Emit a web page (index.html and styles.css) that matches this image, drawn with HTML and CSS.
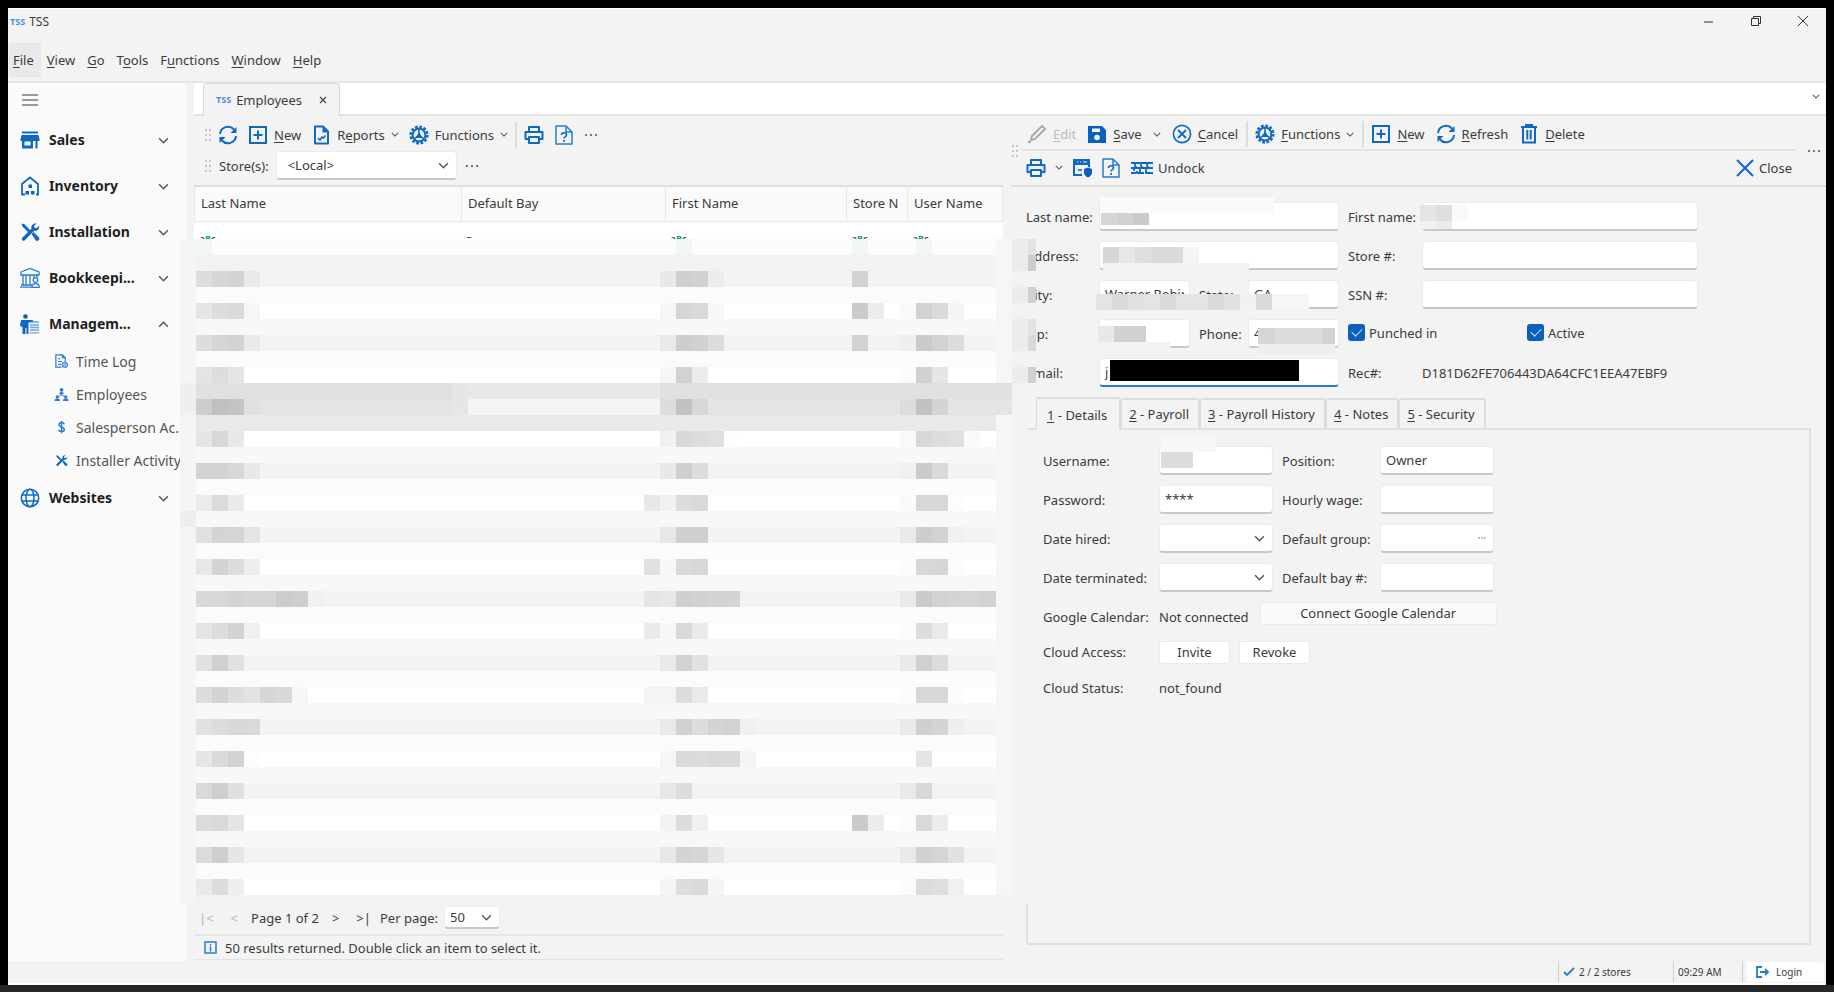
FILE: index.html
```html
<!DOCTYPE html>
<html lang="en">
<head>
  <meta charset="UTF-8">
  <meta name="viewport" content="width=device-width, initial-scale=1.0">
  <title>TSS</title>
  <link rel="stylesheet" href="styles.css">
</head>
<body>
  <!-- shared icons -->
  <svg class="sprite" width="0" height="0">
    <symbol id="i-chevron" viewBox="0 0 10 6"><path d="M1 1l4 4 4-4" fill="none" stroke="#555" stroke-width="1.300"/></symbol>
    <symbol id="i-refresh" viewBox="0 0 20 20"><g fill="none" stroke="#0f68c4" stroke-width="2"><path d="M2 9a8 8 0 0 1 14-4.500"/><path d="M18 11a8 8 0 0 1-14 4.500"/></g><path d="M18.500 2v6h-6zM1.500 18v-6h6z" fill="#0f68c4"/></symbol>
    <symbol id="i-new" viewBox="0 0 20 20"><path d="M2 2h16v16H2zM10 5.500v9M5.500 10h9" fill="none" stroke="#0f68c4" stroke-width="2"/></symbol>
    <symbol id="i-report" viewBox="0 0 20 20"><path d="M4 1.500h8l5 5v12H4z" fill="none" stroke="#0f68c4" stroke-width="2" stroke-linejoin="round"/><path d="M11.500 1.500v6H17z" fill="#0f68c4"/><path d="M7 13l2 2 2-3 1.500 1 2-2.500" fill="none" stroke="#0f68c4" stroke-width="1.600"/></symbol>
    <symbol id="i-gear" viewBox="0 0 20 20"><circle cx="10" cy="10" r="8.400" fill="none" stroke="#0f68c4" stroke-width="2.400" stroke-dasharray="2.700 1.700"/><circle cx="10" cy="10" r="6.400" fill="none" stroke="#0f68c4" stroke-width="2"/><path d="M10 4v6l-5 4M10 10l5 4" fill="none" stroke="#0f68c4" stroke-width="1.500"/><path d="M10 7l3.500 6h-7z" fill="#0f68c4"/></symbol>
    <symbol id="i-print" viewBox="0 0 20 20"><path d="M5 7V2h10v5M5 14H1.500V7h17v7H15M5 12h10v6H5z" fill="none" stroke="#0f68c4" stroke-width="2" stroke-linejoin="round"/></symbol>
    <symbol id="i-help" viewBox="0 0 20 20"><path d="M2 1h10l6 6v12H2z" fill="none" stroke="#2a7bd0" stroke-width="1.500" stroke-linejoin="round"/><path d="M12 1v6h6" fill="none" stroke="#2a7bd0" stroke-width="1.500"/><path d="M7.500 10c0-3 5-3 5 0 0 1.600-2.500 1.700-2.500 3.500M10 15v2" fill="none" stroke="#0f68c4" stroke-width="1.600"/></symbol>
    <symbol id="i-edit" viewBox="0 0 20 20"><path d="M5 12L15 2l3 3L8 15l-4 1z" fill="none" stroke="#a6a6a6" stroke-width="1.800"/><path d="M1 17h3v2H1z" fill="#a6a6a6"/></symbol>
    <symbol id="i-save" viewBox="0 0 20 20"><path d="M2 2h13l4 4v13H1V2z" fill="#0a60bd"/><path d="M5 4.500h8V8H5z" fill="#f3f3f3"/><circle cx="10" cy="13.500" r="2.800" fill="#f3f3f3"/></symbol>
    <symbol id="i-cancel" viewBox="0 0 20 20"><g fill="none" stroke="#0f68c4"><circle cx="10" cy="10" r="8.600" stroke-width="1.600"/><path d="M6 6l8 8M14 6l-8 8" stroke-width="1.800"/></g></symbol>
    <symbol id="i-trash" viewBox="0 0 20 20"><path d="M2 3h16M7 3V1h6v2M4 3v15.500h12V3M8.300 6v9.500M11.700 6v9.500" fill="none" stroke="#0f68c4" stroke-width="2"/></symbol>
    <symbol id="i-shield" viewBox="0 0 20 20"><path d="M10 17H2V2h15v7M2 6h15" fill="none" stroke="#0f68c4" stroke-width="2"/><path d="M2 2h15v4H2z" fill="#0f68c4"/><path d="M5 4h1M8 4h1M11 4h4" stroke="#f3f3f3" stroke-width="1.200"/><path d="M6 12h4" stroke="#0f68c4" stroke-width="1.600"/><path d="M12 11l4-1.500 4 1.500v3.500c0 2.500-2 4-4 5-2-1-4-2.500-4-5z" fill="#0a60bd"/></symbol>
    <symbol id="i-undock" viewBox="0 0 24 20"><path d="M1 5h22M1 10h22M1 15h4c2 0 2-2 2-2m0 2h7m1 0h8M5 5v3l2 2M11 5v3l2 2M17 5v3l2 2M4 10v3M10 10v5M16 10v5" fill="none" stroke="#0f68c4" stroke-width="1.800"/></symbol>
    <symbol id="i-close" viewBox="0 0 20 20"><path d="M2 2l16 16M18 2L2 18" stroke="#0f68c4" stroke-width="2"/></symbol>
    <symbol id="i-tools" viewBox="0 0 20 20"><path d="M1.500 1.500l3 .7L10 8l1.500-1.500c-.7-3 1.500-5.500 5-5L14 4l.6 1.800 1.800.4L19 3.800c.6 3.500-2 5.600-4.800 5L4.500 18.500c-1.500 1-3.500-1-2.500-2.500l6-6L2.400 4.500z" fill="#0f68c4"/><path d="M11.500 12l2-2 5.500 5.500c1.500 2-1.500 4.500-3.200 3z" fill="#0f68c4"/></symbol>
    <symbol id="i-dots" viewBox="0 0 14 4"><path d="M1 1h2v2H1zM6 1h2v2H6zM11 1h2v2h-2z" fill="#777"/></symbol>
    <symbol id="i-grip" viewBox="0 0 6 12"><path d="M0 0h2v2H0zM4 0h2v2H4zM0 5h2v2H0zM4 5h2v2H4zM0 10h2v2H0zM4 10h2v2H4z" fill="#c6c6c6"/></symbol>
  </svg>

  <div class="window">
    <header class="titlebar">
      <span class="logo">TSS</span>
      <span class="title">TSS</span>
      <div class="win-controls">
        <button aria-label="Minimize"><svg width="12" height="12" viewBox="0 0 12 12"><path d="M1 7h9" stroke="#333"/></svg></button>
        <button aria-label="Restore"><svg width="12" height="12" viewBox="0 0 12 12"><path d="M1.500 3.500h7v7h-7zM3.500 3.500v-2h7v7h-2" fill="none" stroke="#333"/></svg></button>
        <button aria-label="Close window"><svg width="12" height="12" viewBox="0 0 12 12"><path d="M1 1l10 10M11 1L1 11" stroke="#333"/></svg></button>
      </div>
    </header>

    <nav class="menubar">
      <button class="open"><u>F</u>ile</button>
      <button><u>V</u>iew</button>
      <button><u>G</u>o</button>
      <button>T<u>o</u>ols</button>
      <button>F<u>u</u>nctions</button>
      <button><u>W</u>indow</button>
      <button><u>H</u>elp</button>
    </nav>

    <div class="workspace">
      <aside class="sidebar">
        <button class="burger" aria-label="Menu"><svg width="16" height="14" viewBox="0 0 16 14"><path d="M0 2h16M0 7h16M0 12h16" stroke="#9a9a9a" stroke-width="2"/></svg></button>
        <button class="group">
          <svg class="nav-icon" viewBox="0 0 20 20"><path d="M2 1.500h16v2H2zM1.500 5h17l1 4.500V11h-2v7.500h-2V11H13v7.500H2V11H.5V9.500z" fill="#0f68c4"/><path d="M4.500 11.500h6v4h-6z" fill="#fafafa"/></svg>
          <span>Sales</span><svg class="chev"><use href="#i-chevron"/></svg>
        </button>
        <button class="group">
          <svg class="nav-icon" viewBox="0 0 20 20"><path d="M5 18.500H2V8l8-6.500L18 8v10.500h-2" fill="none" stroke="#0f68c4" stroke-width="1.800"/><path d="M8.500 8.500h3.500v3.500H8.500zM5.500 15H9v3.500H5.500zM11 15h3.500v3.500H11z" fill="#0a60bd"/></svg>
          <span>Inventory</span><svg class="chev"><use href="#i-chevron"/></svg>
        </button>
        <button class="group">
          <svg class="nav-icon"><use href="#i-tools"/></svg>
          <span>Installation</span><svg class="chev"><use href="#i-chevron"/></svg>
        </button>
        <button class="group">
          <svg class="nav-icon" viewBox="0 0 20 20"><path d="M1 4l9-3.500L19 4v3H1zM3 7v10M6 7v10M10 7v10M14 7v3M17 7v3M0 19.200h12M1 17h11" fill="none" stroke="#2a7bd0" stroke-width="1.300"/><circle cx="15.500" cy="12" r="2.300" fill="none" stroke="#2a7bd0" stroke-width="1.300"/><path d="M12 19.300c0-5 7.200-5 7.200 0z" fill="none" stroke="#2a7bd0" stroke-width="1.300"/></svg>
          <span>Bookkeepi...</span><svg class="chev"><use href="#i-chevron"/></svg>
        </button>
        <button class="group">
          <svg class="nav-icon" viewBox="0 0 20 20"><circle cx="5.500" cy="2.500" r="2.300" fill="#0a60bd"/><path d="M1 6h12v2.500H8.500V20H6.500v-6h-1v6H2.500v-7L0 12z" fill="#0f68c4"/><path d="M11 8h8M10 11h9M10 13.500h9M10 16h9M10 18.800h9" stroke="#6aa5de" stroke-width="1.300"/></svg>
          <span>Managem...</span><svg class="chev up"><use href="#i-chevron"/></svg>
        </button>
        <div class="subnav">
          <a href="#timelog"><svg viewBox="0 0 16 16"><path d="M8 14H2V1h7l3 3v4M9 1v3h3M4.500 5h2M4.500 8h4M4.500 11h3" fill="none" stroke="#2a7bd0" stroke-width="1.300"/><circle cx="11.500" cy="11.500" r="3" fill="#8dbbe8" stroke="#2a7bd0"/></svg><span>Time Log</span></a>
          <a href="#employees"><svg viewBox="0 0 16 16"><path d="M8 5v4M5 10l3-2 3 2" stroke="#2a7bd0" fill="none"/><g fill="#2a7bd0"><circle cx="8" cy="3" r="2"/><path d="M5.500 7.500c0-3 5-3 5 0z"/><circle cx="3.500" cy="10.500" r="1.800"/><path d="M.5 15c0-4 6-4 6 0z"/><circle cx="12.500" cy="10.500" r="1.800"/><path d="M9.500 15c0-4 6-4 6 0z"/></g></svg><span>Employees</span></a>
          <a href="#salesperson"><svg viewBox="0 0 16 16"><path d="M11 4.500C10 2 5.300 2.300 5.300 5c0 3.200 5.700 1.800 5.700 5 0 2.800-5 2.900-6 .3M8 1v13" fill="none" stroke="#2a7bd0" stroke-width="1.600"/></svg><span>Salesperson Ac..</span></a>
          <a href="#installer"><svg viewBox="-2 -2 24 24"><use href="#i-tools" width="20" height="20"/></svg><span>Installer Activity</span></a>
        </div>
        <button class="group">
          <svg class="nav-icon" viewBox="0 0 20 20"><g fill="none" stroke="#0f68c4" stroke-width="1.500"><circle cx="10" cy="10" r="8.700"/><ellipse cx="10" cy="10" rx="4" ry="8.700"/><path d="M1.500 7h17M1.500 13h17"/></g></svg>
          <span>Websites</span><svg class="chev"><use href="#i-chevron"/></svg>
        </button>
      </aside>

      <main class="content">
        <div class="doc-tabs">
          <div class="doc-tab"><span class="logo">TSS</span>Employees<button aria-label="Close tab"><svg width="8" height="8" viewBox="0 0 8 8"><path d="M1 1l6 6M7 1L1 7" stroke="#444" stroke-width="1.200"/></svg></button></div>
          <button class="tab-list" aria-label="Tab list"><svg class="drop"><use href="#i-chevron"/></svg></button>
        </div>

        <div class="panes">
          <section class="list-pane">
            <div class="toolbars">
              <div class="toolbar">
                <svg class="grip"><use href="#i-grip"/></svg>
                <button class="tool" aria-label="Refresh list"><svg class="icon"><use href="#i-refresh"/></svg></button>
                <button class="tool"><svg class="icon"><use href="#i-new"/></svg><span><u>N</u>ew</span></button>
                <button class="tool"><svg class="icon"><use href="#i-report"/></svg><span>R<u>e</u>ports</span><svg class="drop"><use href="#i-chevron"/></svg></button>
                <button class="tool"><svg class="icon"><use href="#i-gear"/></svg><span>Functions</span><svg class="drop"><use href="#i-chevron"/></svg></button>
                <i class="sep"></i>
                <button class="tool" aria-label="Print list"><svg class="icon"><use href="#i-print"/></svg></button>
                <button class="tool" aria-label="Help"><svg class="icon"><use href="#i-help"/></svg></button>
                <button class="tool" aria-label="More"><svg class="dots"><use href="#i-dots"/></svg></button>
              </div>
              <div class="toolbar">
                <svg class="grip"><use href="#i-grip"/></svg>
                <label for="stores">Store(s):</label>
                <div class="picker store-picker">
                  <select id="stores"><option>&lt;Local&gt;</option></select>
                  <svg class="chev"><use href="#i-chevron"/></svg>
                </div>
                <button class="tool" aria-label="More"><svg class="dots"><use href="#i-dots"/></svg></button>
              </div>
            </div>

            <div class="grid">
              <table>
                <colgroup><col class="c-last"><col class="c-bay"><col class="c-first"><col class="c-store"><col></colgroup>
                <thead>
                  <tr><th>Last Name</th><th>Default Bay</th><th>First Name</th><th>Store N</th><th>User Name</th></tr>
                  <tr class="filters"><td><i>a</i>B<i>c</i></td><td><i>=</i></td><td><i>a</i>B<i>c</i></td><td><i>a</i>B<i>c</i></td><td><i>a</i>B<i>c</i></td></tr>
                </thead>
                <tbody id="rows"></tbody>
              </table>
              <svg id="mosaic" class="mosaic" width="856" height="665" shape-rendering="crispEdges"></svg>
            </div>

            <div class="pager">
              <button class="off" aria-label="First page">|&lt;</button>
              <button class="off" aria-label="Previous page">&lt;</button>
              <span>Page 1 of 2</span>
              <button aria-label="Next page">&gt;</button>
              <button aria-label="Last page">&gt;|</button>
              <label for="perpage">Per page:</label>
              <div class="picker page-picker">
                <select id="perpage"><option>50</option></select>
                <svg class="chev"><use href="#i-chevron"/></svg>
              </div>
            </div>
            <div class="results">
              <svg width="13" height="13" viewBox="0 0 13 13"><path d="M1 1h11v11H1z" fill="none" stroke="#2a7bd0" stroke-width="1.500"/><path d="M6.500 3v1.500M6.500 5.500v5" stroke="#2a7bd0" stroke-width="1.500"/></svg>
              <span>50 results returned. Double click an item to select it.</span>
            </div>
          </section>

          <section class="detail-pane">
            <div class="detail-bars">
              <svg class="grip"><use href="#i-grip"/></svg>
              <div class="bar-rows">
                <div class="toolbar first">
                  <button class="tool" disabled><svg class="icon"><use href="#i-edit"/></svg><span><u>E</u>dit</span></button>
                  <button class="tool"><svg class="icon"><use href="#i-save"/></svg><span><u>S</u>ave</span></button>
                  <button class="tool" aria-label="Save options"><svg class="drop"><use href="#i-chevron"/></svg></button>
                  <button class="tool"><svg class="icon"><use href="#i-cancel"/></svg><span><u>C</u>ancel</span></button>
                  <i class="sep"></i>
                  <button class="tool"><svg class="icon"><use href="#i-gear"/></svg><span><u>F</u>unctions</span><svg class="drop"><use href="#i-chevron"/></svg></button>
                  <i class="sep"></i>
                  <button class="tool"><svg class="icon"><use href="#i-new"/></svg><span><u>N</u>ew</span></button>
                  <button class="tool"><svg class="icon"><use href="#i-refresh"/></svg><span><u>R</u>efresh</span></button>
                  <button class="tool"><svg class="icon"><use href="#i-trash"/></svg><span><u>D</u>elete</span></button>
                </div>
                <div class="toolbar second">
                  <button class="tool" aria-label="Print"><svg class="icon"><use href="#i-print"/></svg></button>
                  <button class="tool" aria-label="Print options"><svg class="drop"><use href="#i-chevron"/></svg></button>
                  <button class="tool" aria-label="Permissions"><svg class="icon"><use href="#i-shield"/></svg></button>
                  <button class="tool" aria-label="Help"><svg class="icon"><use href="#i-help"/></svg></button>
                  <button class="tool"><svg class="icon wide"><use href="#i-undock"/></svg><span>Undock</span></button>
                  <button class="tool close"><svg class="icon"><use href="#i-close"/></svg><span>Close</span></button>
                </div>
              </div>
              <button class="tool" aria-label="More"><svg class="dots"><use href="#i-dots"/></svg></button>
            </div>

            <form class="person">
              <label for="last">Last name:</label>
              <div class="field wide"><input id="last">
                <svg class="mask"><path d="M2-5h173v16H2z" fill="#fafafa"/><path d="M2 11h16v12H2z" fill="#d6d6d6"/><path d="M18 11h16v12H18z" fill="#d1d1d1"/><path d="M34 11h16v12H34z" fill="#cbcbcb"/></svg></div>
              <label class="second-label" for="first">First name:</label>
              <div class="field"><input id="first">
                <svg class="mask"><path d="M-2 3h16v16H-2z" fill="#e4e4e4"/><path d="M14 3h16v16H14z" fill="#dfdfdf"/><path d="M30 3h16v16H30z" fill="#fafafa"/><path d="M-2 19h16v8H-2z" fill="#f1f1f1"/><path d="M14 19h16v8H14z" fill="#ebebeb"/></svg></div>

              <label for="addr">Address:</label>
              <div class="field wide"><input id="addr">
                <svg class="mask"><path d="M4 6h16v16H4z" fill="#d6d6d6"/><path d="M20 6h16v16H20z" fill="#e7e7e7"/><path d="M36 6h16v16H36z" fill="#dedede"/><path d="M52 6h32v16H52z" fill="#dadada"/><path d="M84 6h16v16H84z" fill="#f5f5f5"/><path d="M4 22h146v10H4z" fill="#f2f2f2"/></svg></div>
              <label class="second-label" for="store">Store #:</label>
              <div class="field"><input id="store"></div>

              <label for="city">City:</label>
              <div class="field"><input id="city" value="Warner Robins">
                <svg class="mask"><path d="M-3 14h213v16H-3z" fill="#e4e4e4"/><path d="M13 14h16v16H13zM61 14h16v16H61zM109 14h16v16h-16zM157 14h16v16h-16z" fill="#dadada"/><path d="M29 14h16v16H29zM125 14h16v16h-16z" fill="#e0e0e0"/><path d="M141 14h16v16h-16z" fill="#f1f1f1"/><path d="M173 14h37v16h-37z" fill="#f6f6f6"/><path d="M-3 30h213v8H-3z" fill="#f3f3f3"/></svg></div>
              <label class="second-label" for="state">State:</label>
              <div class="field under"><input id="state" value="GA"></div>
              <label class="second-label" for="ssn">SSN #:</label>
              <div class="field"><input id="ssn"></div>

              <label for="zip">Zip:</label>
              <div class="field"><input id="zip">
                <svg class="mask"><path d="M-1 7h16v16H-1z" fill="#e8e8e8"/><path d="M15 7h32v16H15z" fill="#d1d1d1"/><path d="M-1 23h72v6H-1z" fill="#f2f2f2"/></svg></div>
              <label class="second-label" for="phone">Phone:</label>
              <div class="field"><input id="phone" value="4">
                <svg class="mask"><path d="M10 9h77v16H10z" fill="#dcdcdc"/><path d="M10 9h16v16H10z" fill="#d5d5d5"/><path d="M74 9h13v16H74z" fill="#d3d3d3"/><path d="M10 25h77v10H10z" fill="#eee"/></svg></div>
              <div class="checks">
                <label><input type="checkbox" checked>Punched in</label>
                <label><input type="checkbox" checked>Active</label>
              </div>

              <label for="email">Email:</label>
              <div class="field wide focus"><input id="email" value="j">
                <svg class="mask"><path d="M11 2h189v21H11z" fill="#000"/></svg></div>
              <span class="second-label">Rec#:</span>
              <span>D181D62FE706443DA64CFC1EEA47EBF9</span>
            </form>

            <div class="tabs">
              <button class="active"><u>1</u> - Details</button>
              <button><u>2</u> - Payroll</button>
              <button><u>3</u> - Payroll History</button>
              <button><u>4</u> - Notes</button>
              <button><u>5</u> - Security</button>
            </div>
            <form class="details">
              <div class="pairs">
                <label for="user">Username:</label>
                <div class="field"><input id="user">
                  <svg class="mask"><path d="M2-10h55V6H2z" fill="#f7f7f7"/><path d="M2 6h32v16H2z" fill="#dcdcdc"/></svg></div>
                <label class="second-label" for="position">Position:</label>
                <div class="field"><input id="position" value="Owner"></div>
                <label for="pass">Password:</label>
                <div class="field"><input id="pass" value="****"></div>
                <label class="second-label" for="wage">Hourly wage:</label>
                <div class="field"><input id="wage"></div>
                <label for="hired">Date hired:</label>
                <div class="picker"><select id="hired"><option></option></select><svg class="chev"><use href="#i-chevron"/></svg></div>
                <label class="second-label" for="group">Default group:</label>
                <div class="field"><input id="group"><svg class="ellipsis" viewBox="0 0 8 2"><path d="M0 1h2M3 1h2M6 1h2" stroke="#888"/></svg></div>
                <label for="term">Date terminated:</label>
                <div class="picker"><select id="term"><option></option></select><svg class="chev"><use href="#i-chevron"/></svg></div>
                <label class="second-label" for="bay">Default bay #:</label>
                <div class="field"><input id="bay"></div>
              </div>
              <div class="line calendar"><span>Google Calendar:</span><span>Not connected</span><button type="button">Connect Google Calendar</button></div>
              <div class="line"><span>Cloud Access:</span><button type="button">Invite</button><button type="button">Revoke</button></div>
              <div class="line"><span>Cloud Status:</span><span>not_found</span></div>
            </form>
          </section>
        </div>
      </main>
    </div>

    <footer class="statusbar">
      <span class="stores"><svg width="12" height="10" viewBox="0 0 12 10"><path d="M1 5l3 3 7-7" fill="none" stroke="#2a7bd0" stroke-width="1.800"/></svg>2 / 2 stores</span>
      <span class="clock">09:29 AM</span>
      <span class="login"><button><svg width="14" height="12" viewBox="0 0 14 12"><path d="M6 1H1v10h5M4 6h8M9 3l3 3-3 3" fill="none" stroke="#2a7bd0" stroke-width="1.800"/></svg>Login</button></span>
    </footer>
  </div>
  <script src="script.js"></script>
</body>
</html>
```
FILE: styles.css
```css
* {
  box-sizing: border-box;
}
body {
  margin: 0;
  padding: 8px;
  min-height: 100vh;
  display: flex;
  background: linear-gradient(to top, #272727 8px, #000 8px);
  font-family: "Noto Sans", "Open Sans", sans-serif;
  font-size: 13px;
  line-height: 18px;
  color: #3b3b3b;
}
button, input, select {
  font: inherit;
  color: inherit;
}
button {
  background: none;
  border: none;
  padding: 0;
  white-space: nowrap;
}
u {
  text-underline-offset: 2px;
}
.sprite {
  position: absolute;
}
.window {
  flex: 1;
  min-width: 0;
  display: flex;
  flex-direction: column;
  background: #f3f3f3;
  border-bottom: 2px solid #fff;
}
.logo {
  font-size: 9px;
  font-weight: bold;
  color: #4a8fd3;
}

/* title and menu */
.titlebar {
  display: flex;
  align-items: center;
  gap: 4px;
  height: 27px;
  padding-left: 2px;
  border-top: 1px solid #fff;
}
.title {
  font-size: 12px;
}
.win-controls {
  margin-left: auto;
  display: flex;
}
.win-controls button {
  width: 47px;
  height: 26px;
}
.menubar {
  display: flex;
  align-items: center;
  height: 48px;
  padding: 4px 1px 0;
  border-bottom: 2px solid #e6e6e6;
}
.menubar button {
  height: 34px;
  padding: 0 6px;
}
.menubar button.open {
  background: #e9e9e9;
  padding: 0 7px 0 4px;
}

/* sidebar */
.workspace {
  flex: 1;
  display: flex;
  min-height: 0;
}
.sidebar {
  width: 179px;
  flex: none;
  margin-bottom: -1px;
  background: #fafafa;
}
.burger {
  display: flex;
  align-items: center;
  height: 34px;
  padding-left: 14px;
}
.group {
  display: flex;
  align-items: center;
  width: 100%;
  height: 46px;
  padding: 0 18px 0 12px;
  text-align: left;
  font-size: 14px;
  font-weight: bold;
  color: #1f1f1f;
}
.group span {
  flex: 1;
  margin-left: 9px;
}
.nav-icon {
  width: 20px;
  height: 20px;
  flex: none;
}
.chev {
  width: 11px;
  height: 7px;
  flex: none;
}
.chev.up {
  transform: rotate(180deg);
}
.subnav {
  margin: -2px 0;
  padding-left: 46px;
  font-size: 14px;
}
.subnav a {
  display: flex;
  align-items: center;
  gap: 7px;
  height: 33px;
  color: #555;
  text-decoration: none;
  white-space: nowrap;
}
.subnav svg {
  width: 15px;
  height: 15px;
  flex: none;
}

/* document tabs */
.content {
  flex: 1;
  min-width: 0;
  display: flex;
  flex-direction: column;
  margin-left: 7px;
}
.doc-tabs {
  display: flex;
  height: 33px;
  padding-left: 9px;
  background: #fff;
  border-bottom: 2px solid #e2e2e2;
}
.doc-tab {
  display: flex;
  align-items: center;
  gap: 5px;
  height: 33px;
  padding: 0 12px;
  background: #f3f3f3;
  border: 1px solid #d9d9d9;
  border-bottom: none;
  border-radius: 4px 4px 0 0;
}
.doc-tab button {
  margin-left: 12px;
  display: flex;
}
.tab-list {
  margin: 0 6px 10px auto;
}
.panes {
  flex: 1;
  display: grid;
  grid-template-columns: minmax(0, 809fr) minmax(0, 823fr);
}

/* toolbars */
.toolbars {
  padding: 3px 0 4px 11px;
}
.toolbar {
  display: flex;
  align-items: center;
  height: 31px;
}
.tool {
  display: flex;
  align-items: center;
  gap: 6px;
  height: 28px;
  padding: 0 5px;
}
.tool:disabled {
  color: #bcbcbc;
}
.icon {
  width: 20px;
  height: 20px;
  flex: none;
}
.icon.wide {
  width: 24px;
}
.drop {
  width: 8px;
  height: 5px;
}
.dots {
  width: 14px;
  height: 4px;
}
.grip {
  width: 6px;
  height: 12px;
  flex: none;
}
.toolbars .grip {
  margin-right: 2px;
}
.toolbars label {
  margin: 0 7px 0 6px;
}
.sep {
  width: 2px;
  height: 26px;
  margin: 0 2px;
  background: #dcdcdc;
}

/* inputs */
.field, .picker {
  position: relative;
  height: 29px;
}
.field input, .picker select {
  display: block;
  width: 100%;
  height: 100%;
  padding: 0 5px;
  background: #fff;
  border: 1px solid #ececec;
  border-bottom: 2px solid #c8c8c8;
  border-radius: 4px;
  outline: none;
  appearance: none;
}
.field.focus input {
  border-bottom-color: #2a7bd0;
}
.picker .chev {
  position: absolute;
  right: 8px;
  top: 11px;
}
.store-picker {
  width: 181px;
  margin-right: 3px;
}
.store-picker select {
  padding-left: 11px;
}
.ellipsis {
  position: absolute;
  right: 8px;
  top: 13px;
  width: 8px;
  height: 2px;
}
.mask {
  position: absolute;
  left: 0;
  top: 0;
  width: 1px;
  height: 1px;
  overflow: visible;
  z-index: 2;
}

/* employee grid */
.list-pane {
  display: flex;
  flex-direction: column;
  border-bottom: 1px solid #e2e2e2;
}
.grid {
  position: relative;
  border-top: 2px solid #dedede;
  padding-bottom: 9px;
}
table {
  width: 100%;
  table-layout: fixed;
  border-collapse: collapse;
  background: #fff;
}
.c-last { width: 267px; }
.c-bay { width: 204px; }
.c-first { width: 181px; }
.c-store { width: 61px; }
th {
  height: 34px;
  padding: 0 0 2px 6px;
  background: #fafafa;
  border: 1px solid #e8e8e8;
  border-top: none;
  font-weight: normal;
  text-align: left;
  white-space: nowrap;
  overflow: hidden;
}
.filters td {
  height: 34px;
  padding: 2px 5px 0;
  color: #169c83;
  font-size: 9px;
  font-weight: bold;
}
.filters i {
  color: #555;
  font-style: normal;
}
tbody td {
  height: 32px;
  padding: 0;
}
tbody tr:nth-child(odd) {
  background: #f3f3f3;
}
.mosaic {
  position: absolute;
  left: -14px;
  top: 52px;
  z-index: 3;
}
.pager {
  display: flex;
  align-items: center;
  height: 32px;
  padding: 0 8px 3px 5px;
  border-bottom: 2px solid #e6e6e6;
}
.pager button {
  margin-right: 17px;
}
.pager .off {
  color: #b5b5b5;
}
.pager span {
  margin: 0 13px 0 -4px;
}
.pager label {
  margin: 0 6px 0 -8px;
}
.page-picker {
  width: 56px;
  height: 23px;
}
.page-picker .chev {
  top: 8px;
}
.results {
  display: flex;
  align-items: center;
  gap: 8px;
  height: 23px;
  padding-left: 10px;
}

/* employee details */
.detail-pane {
  display: flex;
  flex-direction: column;
  padding-left: 8px;
}
.detail-bars {
  display: flex;
  align-items: center;
  height: 71px;
  padding-left: 1px;
  border-bottom: 2px solid #dedede;
}
.bar-rows {
  flex: 1;
  min-width: 0;
  margin: 0 6px 0 4px;
}
.toolbar.first {
  height: 34px;
  padding-top: 2px;
  border-bottom: 2px solid #e4e4e4;
}
.toolbar.first .tool {
  padding: 0 6px 0 5px;
}
.toolbar.second {
  height: 33px;
  gap: 1px;
}
.toolbar.second .tool {
  gap: 4px;
  padding: 0 4px;
}
.toolbar .close {
  margin-left: auto;
}
.person {
  display: grid;
  grid-template-columns: 73px 91px 58px 91px 83px 276px;
  row-gap: 10px;
  align-items: center;
  padding: 15px 0 10px 15px;
}
.person label, .person span {
  white-space: nowrap;
}
.person .wide {
  grid-column: span 3;
}
.second-label {
  padding-left: 9px;
}
.checks {
  grid-column: span 2;
  display: flex;
  padding: 0 0 2px 9px;
}
.checks label {
  display: flex;
  align-items: center;
  gap: 4px;
  flex: none;
  width: 179px;
}
.checks label:last-child {
  width: auto;
}
.checks input {
  appearance: none;
  width: 17px;
  height: 17px;
  margin: 0;
  border-radius: 3px;
  background: #0a60bd;
  display: grid;
  place-items: center;
}
.checks input:checked::after {
  content: "";
  width: 9px;
  height: 5px;
  margin-bottom: 3px;
  border: solid #cfe2f5;
  border-width: 0 0 1px 1px;
  transform: rotate(-45deg);
}
.tabs {
  display: flex;
  align-items: flex-end;
  padding-left: 25px;
}
.tabs button {
  height: 30px;
  padding: 0 9px 0 7px;
  border: solid #dcdcdc;
  border-width: 2px 2px 0 1px;
  border-radius: 3px 3px 0 0;
}
.tabs .active {
  position: relative;
  height: 33px;
  padding: 0 12px 0 10px;
  margin-bottom: -2px;
  background: #f3f3f3;
}
.details {
  flex: 1;
  margin: 0 15px 15px 15px;
  padding: 16px 15px;
  border: 2px solid #e0e0e0;
}
.pairs {
  display: grid;
  grid-template-columns: 116px 114px 107px 114px;
  row-gap: 10px;
  align-items: center;
}
.pairs label {
  white-space: nowrap;
}
.line {
  display: flex;
  align-items: center;
  height: 36px;
}
.line span:first-child {
  width: 116px;
}
.line button {
  width: 71px;
  height: 23px;
  margin-right: 9px;
  background: #fff;
  border: 1px solid #ececec;
  border-radius: 3px;
}
.line.calendar {
  padding-top: 8px;
  height: 42px;
}
.line.calendar button {
  width: 237px;
  margin: 0 0 8px 11px;
  background: #fafafa;
}

/* status bar */
.statusbar {
  display: flex;
  justify-content: flex-end;
  height: 23px;
  padding: 1px 0;
  font-size: 10px;
}
.statusbar span {
  display: flex;
  align-items: center;
  gap: 4px;
  padding-left: 4px;
  border-left: 1px solid #cfcfcf;
}
.stores {
  width: 115px;
}
.clock {
  width: 69px;
}
.login {
  width: 84px;
}
.login button {
  display: flex;
  align-items: center;
  gap: 6px;
  width: 77px;
  height: 20px;
  padding-left: 9px;
  background: #fff;
  border-radius: 3px;
}
```
FILE: script.js
```js
// redacted rows: grey levels per 16px block for last name, first name, store, user name
const people = [
  ['dd d6 d3 ea', '-- e8 cf d1 ec', 'd2', ''],
  ['e6 dd da f6', '-- f6 d5 d9 f7', 'cb ec', 'fa d2 da f5'],
  ['dd d5 d3 ea', '-- e9 cd d1 dc', 'd2', 'ef cb d2 dc'],
  ['e4 dd e5', '-- f6 d2 eb', '', 'fb d1 e6'],
  ['cd c0 c4 e0', '-- dd c2 d7', '', 'dc c2 d4'],
  ['e5 d7 e8', '-- f1 d8 dc e0 fe', '', 'f9 d7 dc e0 fa'],
  ['d3 d2 d7 e8', '-- e8 cf dd', '', 'f0 cb d9'],
  ['eb db ea', 'e8 f1 dc d9', '', 'fa d7 d7 fd'],
  ['e0 d4 d5 e4', '-- e7 cf cf', '', 'e9 cd d2 f1'],
  ['e7 d4 dd ed', 'e1 f8 d9 d7', '', 'fb d7 d6 fb'],
  ['d8 d7 d3 d6 d5 cc ce f1', 'e5 e7 cf d1 d3 d4', '', 'e9 ca d2 d4 d5 d2'],
  ['e4 dc d3 f0', 'ea f7 d9 ea', '', 'fb dc e9'],
  ['e1 d0 e1', '-- e9 d2 e1', '', 'e9 d0 dc'],
  ['dc d3 dd e2 d6 d8 f6', 'f4 f4 dc e9', '', 'fb d7 d7 fc'],
  ['e1 dc d8 d9', '-- e9 d1 dd d4 d2 f0', '', 'e9 cf d4 ee'],
  ['e6 da d2 fd', '-- f6 da db d9 da f5', '', '-- e4'],
  ['d9 ce df', '-- e7 dd', '', 'e9 d8'],
  ['db d9 e5', '-- f3 dd f0', 'ca ec', 'fb d9 ec'],
  ['db ce e6', '-- e7 d4 d6 e6', '', 'e9 d1 d5 e1'],
  ['e9 dc ee', '-- f5 dd da f5', '', 'fb dc de f0']
];
const starts = [1, 29, 42, 45];
const SIZE = 16;
let out = '';

function rect(x, y, w, h, grey) {
  const fill = grey.length === 2 ? '#' + grey + grey + grey : grey;
  out += `<rect x="${x}" y="${y}" width="${w}" height="${h}" fill="${fill}"/>`;
}

// edges, filter row and the strip under the last row
rect(0, 0, 16, 665, 'f5');
rect(816, 0, 16, 665, 'f6');
rect(832, 0, 16, 665, 'f2');
rect(0, 272, 16, 16, 'ee');
rect(16, 0, 800, 16, 'fc');
rect(16, 656, 816, 9, 'f2');
[16, 496, 672, 736].forEach(x => rect(x, 0, 16, 16, '#f1f6f7'));

people.forEach((cells, i) => {
  const y = 16 + i * 32;
  const selected = i === 4;
  if (selected) {
    rect(0, y, 16, 32, 'ef');
    rect(16, y, 816, 16, 'e0');
    rect(16, y + 16, 816, 16, 'e4');
    rect(272, y, 16, 32, 'e6');
    rect(288, y, 192, 16, 'e8');
    rect(288, y + 16, 192, 16, 'f4');
  } else {
    rect(16, y, 800, 16, i === 0 ? 'f2' : i === 5 ? 'e9' : i % 2 ? 'fb' : 'f8');
    rect(16, y + 16, 800, 16, i % 2 ? 'ff' : 'f3');
  }
  cells.forEach((cell, c) => {
    cell.split(' ').forEach((grey, k) => {
      if (grey && grey !== '--') rect((starts[c] + k) * SIZE, y + 16, SIZE, SIZE, grey);
    });
  });
});

// blocks that run over the detail labels
[[0, 'e3'], [16, 'cc'], [48, 'd0'], [80, 'e2'], [96, 'd8'], [128, 'd0']].forEach(([y, grey]) => {
  rect(848, y, 8, 16, grey);
  rect(832, y, 16, 16, 'ec');
});

document.getElementById('mosaic').innerHTML = out;
document.getElementById('rows').innerHTML = people.map(() => '<tr><td></td><td></td><td></td><td></td><td></td></tr>').join('');
```
